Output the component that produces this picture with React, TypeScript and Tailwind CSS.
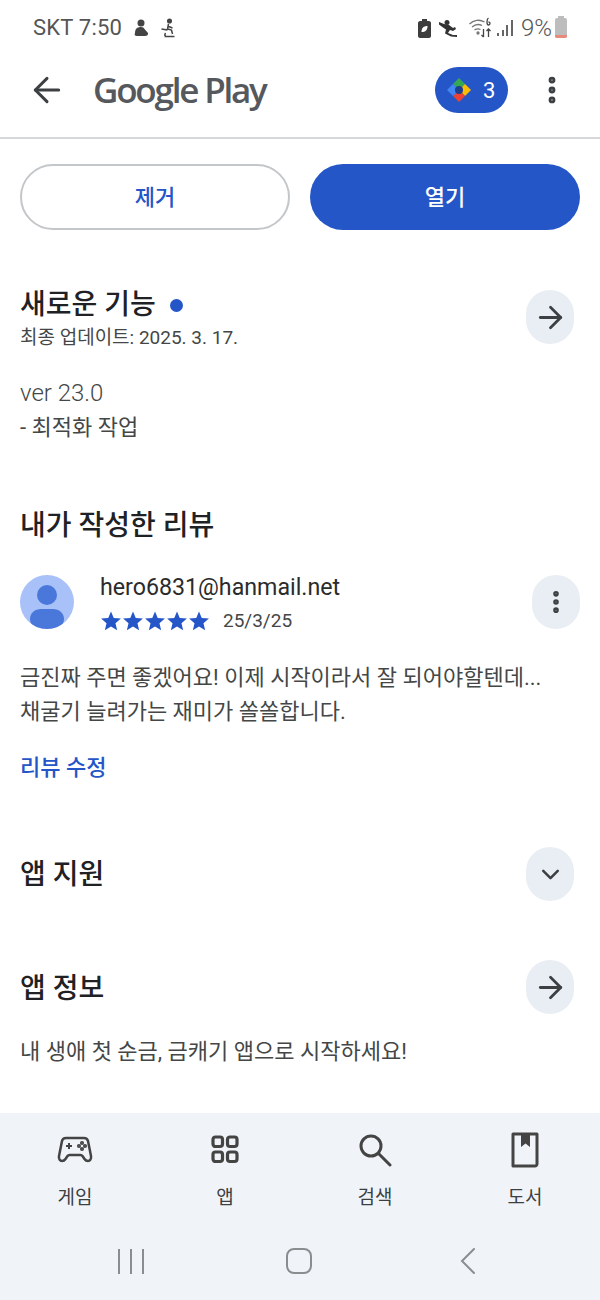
import { ArrowLeft, ArrowRight, ChevronDown, EllipsisVertical } from 'lucide-react';

const FONT = "font-['Roboto','Noto_Sans_CJK_KR',sans-serif]";

function Stars() {
  return (
    <div className="flex">
      {[0, 1, 2, 3, 4].map((i) => (
        <svg key={i} width="22" height="22" viewBox="0 0 24 24" fill="#2456c8">
          <path d="M12 1.500l3 7.200 7.800.6-5.900 5.100 1.800 7.600L12 18l-6.700 4 1.800-7.600L1.200 9.300 9 8.700z" />
        </svg>
      ))}
    </div>
  );
}

function RoundButton({ children }: { children: React.ReactNode }) {
  return (
    <div className="flex h-[54px] w-[48px] items-center justify-center rounded-full bg-[#e9eef4] text-[#3c4043]">
      {children}
    </div>
  );
}

function StatusBar() {
  return (
    <div className="flex h-[55px] items-center justify-between pl-[33px] pr-[33px] text-[22px] text-[#555]">
      <div className="flex items-center">
        <span className="tracking-[0.2px]">SKT 7:50</span>
        <svg className="ml-[11px]" width="16" height="20" viewBox="0 0 16 20" fill="#444">
          <circle cx="8" cy="5" r="3.500" />
          <path d="M2 15c0-4 2-6 6-6 2 0 3 .8 3.500 2l3.500 4c.5 2-1 3-3 3H4c-2 0-3-1-2-3z" />
        </svg>
        <svg className="ml-[11px]" width="17" height="20" viewBox="0 0 16 20" fill="none" stroke="#444" strokeWidth="1.500">
          <circle cx="9" cy="3" r="1.800" fill="#444" />
          <path d="M8 6l-1 5 4 1 1 4M7 8l5 2M1 11l6 1M4 18.500h10M5 15a3 3 0 0 0 0 3.500" />
        </svg>
      </div>
      <div className="flex items-center">
        <svg width="13" height="20" viewBox="0 0 13 20">
          <path d="M4 1h5v2h2c1 0 2 1 2 2v13c0 1-1 2-2 2H2c-1 0-2-1-2-2V5c0-1 1-2 2-2h2z" fill="#3d3d3d" />
          <path d="M3.500 14c0-4 2-6 6-6 0 4-2 6-6 6z" fill="#fff" />
        </svg>
        <svg className="ml-[8px]" width="22" height="18" viewBox="0 0 22 18" fill="#333">
          <circle cx="8" cy="3.500" r="2.500" />
          <path d="M0 3l5 2 5 1 4 3 2-1 1 2-3 2-3-1-2 3 5 2 4 0v2l-6-.5-6-3 1-4-3-2-4-3z" />
        </svg>
        <svg className="ml-[7px]" width="25" height="24" viewBox="0 0 24 24" fill="none" stroke="#777" strokeWidth="1.300">
          <path d="M1 8c4-4 10-5 15-2M3.500 11c3-2.500 7-3 10-1.500M6 14c2-1.500 4-1.500 6-.5" />
          <circle cx="9.500" cy="17" r="1" fill="#777" />
          <path d="M15 13v8M13 19l2 2M20 21v-8M18 15l2-2 2 2" stroke="#444" />
          <path d="M20 2c-2 1-2 7 0 7s2-3 0-3" stroke="#444" />
        </svg>
        <div className="ml-[4px] flex h-[16px] items-end gap-[2.500px]">
          <div className="h-[3px] w-[2px] bg-[#666]" />
          <div className="h-[6px] w-[2px] bg-[#666]" />
          <div className="h-[11px] w-[2px] bg-[#666]" />
          <div className="h-[16px] w-[2px] bg-[#666]" />
        </div>
        <span className="ml-[8px] text-[24px] font-light">9%</span>
        <div className="relative ml-[3px] h-[20px] w-[12px] rounded-[2px] bg-[#bdbdbd]">
          <div className="absolute -top-[2px] left-[3px] h-[2px] w-[6px] bg-[#bdbdbd]" />
          <div className="absolute bottom-0 left-0 h-[3px] w-full rounded-b-[2px] bg-[#e8897c]" />
        </div>
      </div>
    </div>
  );
}

function Header() {
  return (
    <div className="flex h-[84px] items-center border-b-2 border-[#d5d7d9] pb-[12px] pl-[27px] pr-[31px]">
      <ArrowLeft size={40} strokeWidth={1.800} className="text-[#3c4043]" />
      <span className="ml-[26px] font-['Open_Sans',sans-serif] text-[35px] font-[550] tracking-[-2.200px] text-[#55585c]">Google Play</span>
      <div className="ml-auto flex h-[46px] w-[73px] items-center rounded-full bg-[#2456c8] pl-[12px]">
        <svg width="24" height="24" viewBox="0 0 24 24">
          <path d="M12 0l6 6-6 6-6-6z" fill="#34a853" />
          <path d="M18 6l6 6-6 6-6-6z" fill="#fbbc04" />
          <path d="M12 12l6 6-6 6-6-6z" fill="#ea4335" />
          <path d="M6 6l6 6-6 6-6-6z" fill="#4285f4" />
          <circle cx="12" cy="12" r="4" fill="#1d3f8f" />
        </svg>
        <span className="ml-[12px] text-[22px] text-white">3</span>
      </div>
      <EllipsisVertical size={34} strokeWidth={2.800} className="ml-[27px] text-[#3c4043]" />
    </div>
  );
}

function NavItem({ icon, label }: { icon: React.ReactNode; label: string }) {
  return (
    <div className="flex w-[150px] flex-col items-center">
      <div className="flex h-[40px] items-center justify-center text-[#444]">{icon}</div>
      <span className="mt-[15px] text-[19px] leading-[26px] text-[#3c4043]">{label}</span>
    </div>
  );
}

export default function App() {
  return (
    <div className={`${FONT} flex h-[1300px] w-[600px] flex-col overflow-hidden bg-white`}>
      <StatusBar />
      <Header />

      <div className="mt-[25px] flex gap-[20px] px-[20px]">
        <button className="h-[66px] w-[270px] rounded-full border-2 border-[#c4c7c9] text-[22px] font-medium text-[#2456c8]">제거</button>
        <button className="h-[66px] w-[270px] rounded-full bg-[#2456c8] text-[22px] font-medium text-white">열기</button>
      </div>

      {/* 새로운 기능 */}
      <div className="mt-[58px] flex items-start justify-between pl-[20px] pr-[26px]">
        <div>
          <div className="flex items-center">
            <span className="text-[28px] font-medium leading-[34px] text-[#202124]">새로운 기능</span>
            <span className="ml-[14px] h-[13px] w-[13px] rounded-full bg-[#2456c8]" />
          </div>
          <div className="mt-[2px] text-[19px] leading-[28px] text-[#444746]">최종 업데이트: 2025. 3. 17.</div>
        </div>
        <div className="mt-[2px]">
          <RoundButton><ArrowRight size={35} strokeWidth={1.900} /></RoundButton>
        </div>
      </div>
      <div className="mt-[24px] px-[20px] text-[#444746]">
        <div className="text-[24px] font-light leading-[35px]">ver 23.0</div>
        <div className="text-[22px] leading-[34px]">- 최적화 작업</div>
      </div>

      {/* 리뷰 */}
      <div className="mt-[64px] px-[20px] text-[28px] font-medium leading-[34px] text-[#202124]">내가 작성한 리뷰</div>
      <div className="mt-[26px] flex items-center px-[20px]">
        <div className="h-[54px] w-[54px] overflow-hidden rounded-full bg-[#a8c1f8]">
          <svg width="54" height="54" viewBox="0 0 54 54" fill="#4a78da">
            <circle cx="27" cy="20" r="10" />
            <path d="M10 44c0-6 5-10 11-10h12c6 0 11 4 11 10 0 6-5 10-11 10H21c-6 0-11-4-11-10z" />
          </svg>
        </div>
        <div className="ml-[26px] pt-[4px]">
          <div className="text-[23.2px] leading-[28px] text-[#2b2b2b]">hero6831@hanmail.net</div>
          <div className="mt-[6px] flex items-center">
            <Stars />
            <span className="ml-[13px] text-[19px] leading-[28px] text-[#444746]">25/3/25</span>
          </div>
        </div>
        <div className="ml-auto">
          <RoundButton><EllipsisVertical size={28} strokeWidth={2.800} /></RoundButton>
        </div>
      </div>
      <div className="mt-[26px] px-[20px] text-[22px] leading-[34px] text-[#444746]">
        <div className="whitespace-nowrap">금진짜 주면 좋겠어요! 이제 시작이라서 잘 되어야할텐데...</div>
        <div className="whitespace-nowrap">채굴기 늘려가는 재미가 쏠쏠합니다.</div>
      </div>
      <div className="mt-[22px] px-[20px] text-[22px] font-medium leading-[34px] text-[#2456c8]">리뷰 수정</div>

      {/* 앱 지원 / 앱 정보 */}
      <div className="mt-[62px] flex items-center justify-between pl-[20px] pr-[26px]">
        <span className="pt-[2px] text-[28px] font-medium text-[#202124]">앱 지원</span>
        <RoundButton><ChevronDown size={29} strokeWidth={2.100} /></RoundButton>
      </div>
      <div className="mt-[59px] flex items-center justify-between pl-[20px] pr-[26px]">
        <span className="pt-[4px] text-[28px] font-medium text-[#202124]">앱 정보</span>
        <RoundButton><ArrowRight size={35} strokeWidth={1.900} /></RoundButton>
      </div>
      <div className="mt-[21px] px-[20px] text-[22px] leading-[34px] text-[#444746]">내 생애 첫 순금, 금캐기 앱으로 시작하세요!</div>

      {/* 하단 탭 */}
      <div className="mt-auto h-[187px] bg-[#f0f4f9]">
        <div className="flex pt-[17px]">
          <NavItem
            label="게임"
            icon={
              <svg width="36" height="30" viewBox="0 0 36 30" fill="none" stroke="currentColor" strokeWidth="2.500" strokeLinejoin="round">
                <path d="M9 3h18c2 0 3.500 1 4 3l3 15c.5 3-1 5-3 5-1.500 0-2.500-.5-3.500-2l-2-3c-.5-.7-1-1-2-1H12.500c-1 0-1.500.3-2 1l-2 3c-1 1.500-2 2-3.500 2-2 0-3.500-2-3-5L5 6c.5-2 2-3 4-3z" />
                <path d="M9 11h6M12 8v6" strokeWidth="2" />
                <circle cx="25" cy="8" r=".8" fill="currentColor" />
                <circle cx="25" cy="14" r=".8" fill="currentColor" />
                <circle cx="22" cy="11" r=".8" fill="currentColor" />
                <circle cx="28" cy="11" r=".8" fill="currentColor" />
              </svg>
            }
          />
          <NavItem
            label="앱"
            icon={
              <svg width="28" height="30" viewBox="0 0 28 30" fill="none" stroke="currentColor" strokeWidth="3.200">
                <rect x="2" y="2" width="9.500" height="9.500" rx="2.500" />
                <rect x="16.500" y="2" width="9.500" height="9.500" rx="2.500" />
                <rect x="2" y="17" width="9.500" height="9.500" rx="2.500" />
                <rect x="16.500" y="17" width="9.500" height="9.500" rx="2.500" />
              </svg>
            }
          />
          <NavItem
            label="검색"
            icon={
              <svg width="34" height="34" viewBox="0 0 34 34" fill="none" stroke="currentColor" strokeWidth="3">
                <circle cx="13" cy="13" r="10" />
                <path d="M20.500 20.500L32 32" strokeLinecap="round" />
              </svg>
            }
          />
          <NavItem
            label="도서"
            icon={
              <svg width="28" height="36" viewBox="0 0 28 36" fill="none" stroke="currentColor" strokeWidth="3">
                <path d="M2 2h24v30c0 1-1 2-2 2H2z" strokeLinejoin="round" />
                <path d="M10 2h9v13l-4.500-3.500L10 15z" fill="currentColor" stroke="none" />
              </svg>
            }
          />
        </div>
        <div className="mt-[36px] flex items-center justify-center pr-[6px]">
          <div className="flex h-[25px] w-[26px] justify-between">
            <div className="h-full w-[2px] bg-[#8a8d90]" />
            <div className="h-full w-[2px] bg-[#8a8d90]" />
            <div className="h-full w-[2px] bg-[#8a8d90]" />
          </div>
          <div className="ml-[142px] h-[26px] w-[26px] rounded-[8px] border-2 border-[#8a8d90]" />
          <svg className="ml-[148px]" width="16" height="28" viewBox="0 0 16 28" fill="none" stroke="#8a8d90" strokeWidth="2" strokeLinecap="round">
            <path d="M14 2L2 14l12 12" />
          </svg>
        </div>
      </div>
    </div>
  );
}
